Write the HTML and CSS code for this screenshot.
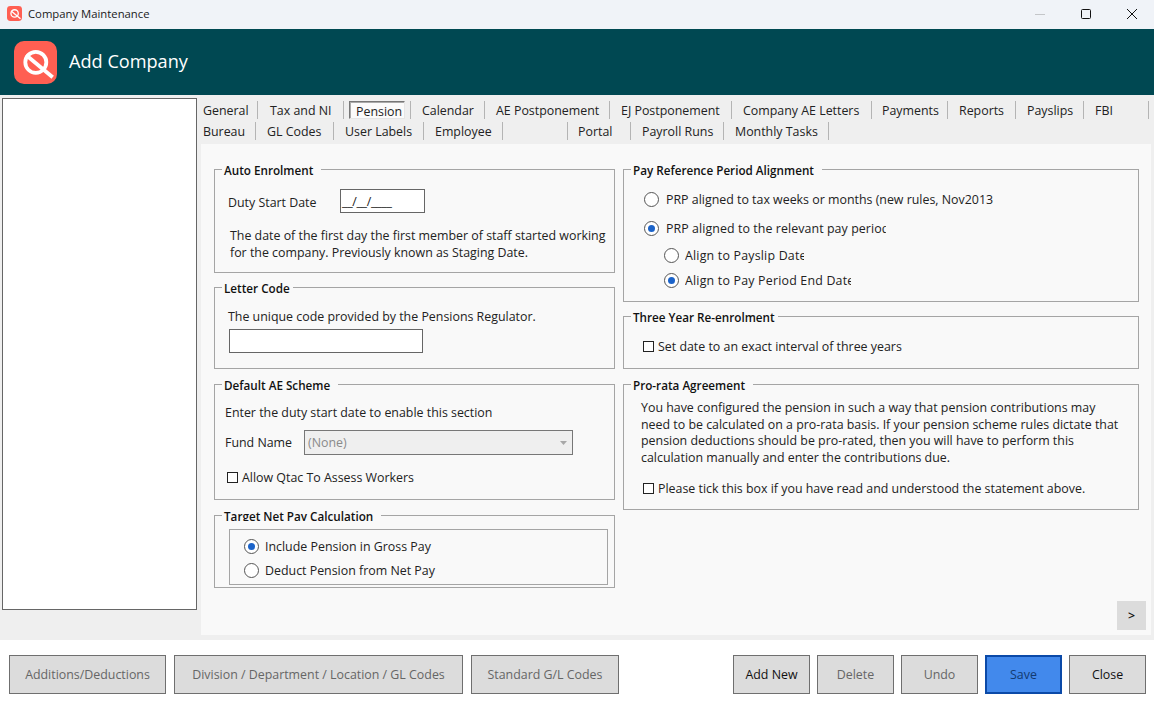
FILE: index.html
```html
<!DOCTYPE html>
<html lang="en">
<head>
    <meta charset="UTF-8">
    <title>Company Maintenance</title>
    <link rel="stylesheet" href="styles.css">
</head>
<body>
    <div class="window">
        <div class="titlebar">
            <svg class="app-icon" width="15" height="15" viewBox="0 0 43 43">
                <rect width="43" height="43" rx="10" fill="#ff5f52"/>
                <circle cx="21.8" cy="21.3" r="10.5" fill="none" stroke="#fff" stroke-width="3.8"/>
                <path d="M12 14 L38.7 36.3" stroke="#fff" stroke-width="3.8"/>
            </svg>
            <span class="title-text">Company Maintenance</span>
            <div class="win-controls">
                <svg width="12" height="12" viewBox="0 0 12 12"><path d="M1 6.5H11" stroke="#c4c6c9"/></svg>
                <svg width="12" height="12" viewBox="0 0 12 12"><rect x="1.5" y="1.5" width="9" height="9" rx="1" fill="none" stroke="#111"/></svg>
                <svg width="12" height="12" viewBox="0 0 12 12"><path d="M1 1L11 11M11 1L1 11" stroke="#111"/></svg>
            </div>
        </div>

        <div class="header">
            <svg class="logo" width="43" height="43" viewBox="0 0 43 43">
                <rect width="43" height="43" rx="10" fill="#ff5f52"/>
                <circle cx="21.8" cy="21.3" r="10.5" fill="none" stroke="#fff" stroke-width="3.8"/>
                <path d="M12 14 L38.7 36.3" stroke="#fff" stroke-width="3.8"/>
            </svg>
            <span class="header-title">Add Company</span>
        </div>

        <div class="main">
            <div class="sidebar"></div>
            <div class="work">
                <div class="tabs">
                    <div class="tab-row">
                        <span class="tab w-general">General</span>
                        <span class="tab w-tax">Tax and NI</span>
                        <span class="tab w-pension active">Pension</span>
                        <span class="tab w-calendar">Calendar</span>
                        <span class="tab w-aep">AE Postponement</span>
                        <span class="tab w-ejp">EJ Postponement</span>
                        <span class="tab w-letters">Company AE Letters</span>
                        <span class="tab w-payments">Payments</span>
                        <span class="tab w-reports">Reports</span>
                        <span class="tab w-payslips">Payslips</span>
                        <span class="tab w-fbi">FBI</span>
                    </div>
                    <div class="tab-row">
                        <span class="tab w-bureau">Bureau</span>
                        <span class="tab w-gl">GL Codes</span>
                        <span class="tab w-labels">User Labels</span>
                        <span class="tab w-employee">Employee</span>
                        <span class="tab w-blank"></span>
                        <span class="tab w-portal">Portal</span>
                        <span class="tab w-runs">Payroll Runs</span>
                        <span class="tab w-monthly">Monthly Tasks</span>
                    </div>
                </div>

                <div class="panel">
                    <div class="col col-left">
                        <fieldset class="group h-auto">
                            <legend class="legend-wide">Auto Enrolment</legend>
                            <div class="duty-row">
                                <span class="duty-label">Duty Start Date</span>
                                <div class="input date-input">__/__/____</div>
                            </div>
                            <p class="duty-note">The date of the first day the first member of staff started working for the company. Previously known as Staging Date.</p>
                        </fieldset>

                        <fieldset class="group h-letter">
                            <legend>Letter Code</legend>
                            <p class="letter-note">The unique code provided by the Pensions Regulator.</p>
                            <div class="input letter-input"></div>
                        </fieldset>

                        <fieldset class="group h-scheme">
                            <legend class="legend-wide">Default AE Scheme</legend>
                            <p class="scheme-note">Enter the duty start date to enable this section</p>
                            <div class="fund-row">
                                <span class="fund-label">Fund Name</span>
                                <div class="select">
                                    <span>(None)</span>
                                    <svg width="7" height="4" viewBox="0 0 7 4"><path d="M0 0H7L3.5 4Z" fill="#a8a8a8"/></svg>
                                </div>
                            </div>
                            <label class="check scheme-check"><span class="box"></span>Allow Qtac To Assess Workers</label>
                        </fieldset>

                        <fieldset class="group h-target">
                            <legend class="legend-wide clip-legend">Target Net Pay Calculation</legend>
                            <div class="inner-box">
                                <label class="radio"><span class="dot on"></span>Include Pension in Gross Pay</label>
                                <label class="radio"><span class="dot"></span>Deduct Pension from Net Pay</label>
                            </div>
                        </fieldset>
                    </div>

                    <div class="col col-right">
                        <fieldset class="group h-prp">
                            <legend class="legend-wide">Pay Reference Period Alignment</legend>
                            <label class="radio prp-1"><span class="dot"></span>PRP aligned to tax weeks or months (new rules, Nov2013</label>
                            <label class="radio prp-2"><span class="dot on"></span><span class="clip w-period">PRP aligned to the relevant pay period</span></label>
                            <label class="radio prp-3"><span class="dot"></span><span class="clip w-payslip">Align to Payslip Date</span></label>
                            <label class="radio prp-4"><span class="dot on"></span><span class="clip w-end">Align to Pay Period End Date</span></label>
                        </fieldset>

                        <fieldset class="group h-three">
                            <legend>Three Year Re-enrolment</legend>
                            <label class="check three-check"><span class="box"></span>Set date to an exact interval of three years</label>
                        </fieldset>

                        <fieldset class="group h-rata">
                            <legend class="legend-wide">Pro-rata Agreement</legend>
                            <p class="rata-note">You have configured the pension in such a way that pension contributions may need to be calculated on a pro-rata basis. If your pension scheme rules dictate that pension deductions should be pro-rated, then you will have to perform this calculation manually and enter the contributions due.</p>
                            <label class="check rata-check"><span class="box"></span>Please tick this box if you have read and understood the statement above.</label>
                        </fieldset>
                    </div>

                    <button class="next-btn">&gt;</button>
                </div>
            </div>
        </div>

        <div class="footer">
            <div class="btn-group">
                <button class="btn muted w-add">Additions/Deductions</button>
                <button class="btn muted w-div">Division / Department / Location / GL Codes</button>
                <button class="btn muted w-std">Standard G/L Codes</button>
            </div>
            <div class="btn-group actions">
                <button class="btn small">Add New</button>
                <button class="btn small muted">Delete</button>
                <button class="btn small muted">Undo</button>
                <button class="btn small save">Save</button>
                <button class="btn small">Close</button>
            </div>
        </div>
    </div>
</body>
</html>
```

FILE: styles.css
```css
* {
    box-sizing: border-box;
}
html, body {
    margin: 0;
    padding: 0;
}
body {
    font-family: "Open Sans", "Noto Sans", sans-serif;
    font-size: 12.4px;
    color: #222;
    background-color: #fff;
}
.window {
    width: 1154px;
    height: 707px;
    display: flex;
    flex-direction: column;
    overflow: hidden;
}

/* title bar */
.titlebar {
    height: 29px;
    background-color: #f0f3f8;
    display: flex;
    align-items: center;
    padding: 0 0 2px 7px;
}
.app-icon {
    margin-bottom: 1px;
}
.title-text {
    margin-left: 6px;
    font-size: 11.3px;
    color: #1a1a1a;
}
.win-controls {
    margin-left: auto;
    display: flex;
    gap: 34px;
    padding-right: 16px;
}

/* header */
.header {
    height: 66px;
    background-color: #004852;
    display: flex;
    align-items: center;
    padding-left: 14px;
}
.logo {
    margin-top: 1px;
}
.header-title {
    margin: 0 0 2px 12px;
    font-size: 18.15px;
    color: #fff;
}

/* main */
.main {
    height: 545px;
    background-color: #efefef;
    display: flex;
    padding: 3px 3px 5px 2px;
}
.sidebar {
    width: 195px;
    height: 512px;
    background-color: #fff;
    border: 1px solid #666;
}
.work {
    margin-left: 4px;
    flex: 1;
    display: flex;
    flex-direction: column;
}

/* tabs */
.tabs {
    height: 46px;
}
.tab-row {
    display: flex;
    height: 21px;
    padding-top: 3px;
}
.tab {
    height: 18px;
    line-height: 20px;
    padding-left: 11px;
    border-right: 1px solid #b4b4b4;
    white-space: nowrap;
    flex: none;
}
.tab.active {
    border: 1px solid;
    border-color: #777 #e6e6e6 #e6e6e6 #777;
    box-shadow: inset 1px 1px 0 #aaa;
    background-color: #fbfbfb;
    padding-left: 6px;
    margin: 0 5px;
}
.w-general { width: 57px; padding-left: 2px; }
.w-tax { width: 86px; padding-left: 12px; }
.w-pension { width: 56px; }
.w-calendar { width: 75px; border-left: 1px solid #b4b4b4; }
.w-aep { width: 125px; }
.w-ejp { width: 122px; }
.w-letters { width: 140px; }
.w-payments { width: 76px; padding-left: 10px; }
.w-reports { width: 68px; }
.w-payslips { width: 68px; }
.w-fbi { width: 65px; }
.w-bureau { width: 55px; padding-left: 2px; }
.w-gl { width: 78px; }
.w-labels { width: 90px; }
.w-employee { width: 79px; }
.w-blank { width: 65px; }
.w-portal { width: 63px; padding-left: 10px; }
.w-runs { width: 93px; }
.w-monthly { width: 105px; }

/* panel */
.panel {
    position: relative;
    height: 491px;
    background-color: #f9f9f9;
    display: flex;
    padding: 16px 12px 0 13px;
    gap: 8px;
}
.col {
    display: flex;
    flex-direction: column;
}
.col-left {
    width: 401px;
}
.col-right {
    width: 516px;
}
.group {
    margin: 0 0 6px;
    padding: 0;
    border: 1px solid #a5a5a5;
    min-inline-size: 0;
    flex: none;
}
.group legend {
    margin-left: 7px;
    padding: 3px 3px 1px 2px;
    font-size: 11.7px;
    font-weight: 600;
    line-height: 14px;
    color: #111;
}
.group legend.legend-wide {
    padding-right: 8px;
}
.group legend.clip-legend {
    clip-path: inset(0 0 3px 0);
}
.h-auto { height: 113px; margin-bottom: 5px; }
.h-letter { height: 91px; }
.h-scheme { height: 125px; }
.h-target { height: 82px; }
.h-prp { height: 142px; margin-bottom: 5px; }
.h-three { height: 62px; }
.h-rata { height: 135px; }
p {
    margin: 0;
}
.duty-row {
    display: flex;
    align-items: center;
    padding: 11px 0 0 13px;
}
.duty-label {
    width: 112px;
    margin-top: 2px;
}
.input {
    height: 24px;
    border: 1px solid #666;
    background-color: #fff;
}
.date-input {
    width: 85px;
    line-height: 23px;
    padding-left: 1px;
    letter-spacing: -0.3px;
}
.duty-note {
    padding: 14px 4px 0 15px;
    line-height: 17px;
}
.letter-note {
    padding: 11px 0 0 13px;
    line-height: 20px;
}
.letter-input {
    width: 194px;
    margin: 2px 0 0 14px;
}
.scheme-note {
    padding: 10px 0 0 10px;
    line-height: 20px;
}
.fund-row {
    display: flex;
    align-items: center;
    padding: 7px 0 0 10px;
}
.fund-label {
    width: 79px;
}
.select {
    width: 269px;
    height: 25px;
    border: 1px solid #777;
    background-color: #efefef;
    color: #8a8a8a;
    display: flex;
    align-items: center;
    justify-content: space-between;
    padding: 0 5px 0 3px;
}
.check {
    display: flex;
    align-items: center;
    line-height: 17px;
    white-space: nowrap;
}
.box {
    width: 11px;
    height: 11px;
    border: 1px solid #222;
    background-color: #fff;
    margin-right: 4px;
    flex: none;
}
.scheme-check {
    padding: 14px 0 0 12px;
}
.inner-box {
    width: 379px;
    height: 56px;
    margin: 5px 0 0 14px;
    border: 1px solid #a5a5a5;
    padding: 7px 0 0 14px;
    display: flex;
    flex-direction: column;
    gap: 5px;
}
.radio {
    display: flex;
    align-items: center;
    height: 19px;
    white-space: nowrap;
}
.dot {
    width: 15px;
    height: 15px;
    border: 1px solid #555;
    border-radius: 50%;
    background-color: #fff;
    margin-right: 6px;
    flex: none;
    position: relative;
}
.dot.on::after {
    content: "";
    position: absolute;
    left: 3px;
    top: 3px;
    width: 7px;
    height: 7px;
    border-radius: 50%;
    background-color: #1b63c9;
}
.clip {
    overflow: hidden;
    display: block;
}
.w-period { width: 220px; letter-spacing: 0.08px; }
.w-payslip { width: 119px; letter-spacing: 0.2px; }
.w-end { width: 166px; letter-spacing: 0.2px; }
.prp-1 { margin: 12px 0 0 20px; }
.prp-2 { margin: 10px 0 0 20px; }
.prp-3 { margin: 8px 0 0 40px; }
.prp-4 { margin: 6px 0 0 40px; }
.prp-1 .dot, .prp-2 .dot {
    margin-right: 7px;
}
.three-check {
    padding: 13px 0 0 19px;
}
.rata-note {
    padding: 7px 14px 0 17px;
    line-height: 16.7px;
}
.rata-check {
    padding: 13px 0 0 19px;
}
.next-btn {
    position: absolute;
    right: 5px;
    bottom: 5px;
    width: 29px;
    height: 29px;
    border: none;
    background-color: #dcdcdc;
    font: inherit;
    font-weight: 600;
    color: #111;
}

/* footer */
.footer {
    height: 67px;
    display: flex;
    justify-content: space-between;
    padding: 15px 8px 0 9px;
}
.btn-group {
    display: flex;
    gap: 8px;
}
.actions {
    gap: 7px;
}
.btn {
    height: 39px;
    border: 1px solid #6f6f6f;
    background-color: #dcdcdc;
    font: inherit;
    color: #111;
}
.btn.muted {
    color: #666;
}
.w-add { width: 157px; }
.w-div { width: 289px; }
.w-std { width: 148px; }
.btn.small {
    width: 77px;
}
.btn.save {
    background-color: #4289ec;
    border: 2px solid #0b4aa8;
    color: #123a70;
}
```
